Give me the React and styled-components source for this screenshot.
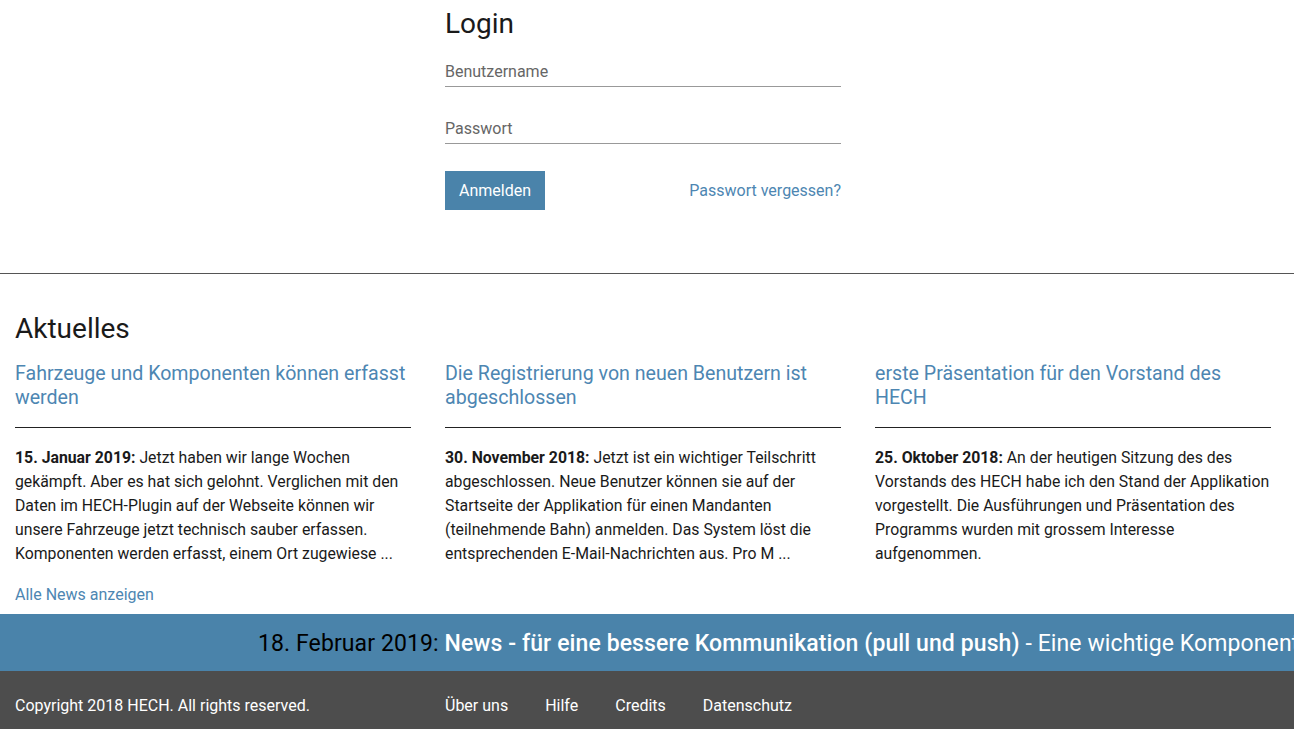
import React from 'react';
import styled, { createGlobalStyle } from 'styled-components';

const Colors = {
  blue: '#4a83aa',
  link: '#4d86b2',
  text: '#1a1a1a',
  label: '#666666',
  footer: '#4d4d4d',
};

const GlobalStyle = createGlobalStyle`
  html, body { margin: 0; padding: 0; background: #fff; }
  body {
    font-family: Roboto, "Liberation Sans", sans-serif;
    color: ${Colors.text};
    font-size: 16px;
  }
  * { box-sizing: border-box; }
`;

const Page = styled.div`
  width: 1294px;
  overflow: hidden;
`;

/* LOGIN block */
const LoginSection = styled.section`
  display: grid;
  grid-template-columns: 396px;
  padding: 0 0 0 445px;
  height: 274px;
  border-bottom: 1px solid #555;
`;

const Title = styled.h1`
  margin: 0;
  font-weight: 400;
  font-size: 28px;
  line-height: 34px;
  padding-top: 7px;
`;

const Field = styled.label`
  display: block;
  margin-top: ${p => p.first ? '21px' : '32px'};
  padding-bottom: 5px;
  border-bottom: 1px solid #999;
  color: ${Colors.label};
  font-size: 16px;
  line-height: 19px;
`;

const ActionRow = styled.div`
  display: flex;
  justify-content: space-between;
  align-items: center;
  margin-top: 27px;
`;

const Button = styled.button`
  width: 100px;
  height: 39px;
  border: none;
  background: ${Colors.blue};
  color: #fff;
  font-family: inherit;
  font-size: 16px;
  padding: 0;
`;

const Link = styled.a`
  color: ${Colors.link};
  text-decoration: none;
  font-size: 16px;
  line-height: 19px;
`;

/* NEWS block */
const NewsSection = styled.section`
  padding: 38px 0 0 15px;
  height: 340px;
`;

const SectionTitle = styled.h2`
  margin: 0;
  font-weight: 400;
  font-size: 28px;
  line-height: 34px;
`;

const NewsGrid = styled.div`
  display: grid;
  grid-template-columns: repeat(3, 396px);
  column-gap: 34px;
  margin-top: 16px;
`;

const NewsItem = styled.article``;

const NewsTitle = styled.h3`
  margin: 0;
  height: 66px;
  font-weight: 400;
  font-size: 19.6px;
  line-height: 24px;
  color: ${Colors.link};
  border-bottom: 1px solid #222;
`;

const NewsBody = styled.p`
  margin: 18px 0 0;
  font-size: 15.8px;
  line-height: 24px;
  color: ${Colors.text};
`;

const AllNews = styled(Link)`
  display: inline-block;
  margin-top: 19px;
`;

/* TICKER and FOOTER */
const Ticker = styled.div`
  height: 57px;
  background: ${Colors.blue};
  display: flex;
  align-items: center;
  padding: 2px 0 0 258px;
  white-space: nowrap;
  overflow: hidden;
  font-size: 23px;
  letter-spacing: 0.1px;
  color: #fff;
`;

const TickerDate = styled.span`
  color: #000;
`;

const TickerTitle = styled.b`
  font-weight: 500;
`;

const Footer = styled.footer`
  height: 58px;
  background: ${Colors.footer};
  display: grid;
  grid-template-columns: 430px 1fr;
  align-items: center;
  padding: 10px 0 0 15px;
  color: #fff;
  font-size: 16px;
`;

const FooterLinks = styled.nav`
  display: flex;
  column-gap: 37px;
`;

const FooterLink = styled.a`
  color: #fff;
  text-decoration: none;
`;

const news = [
  {
    title: 'Fahrzeuge und Komponenten können erfasst werden',
    date: '15. Januar 2019:',
    text: 'Jetzt haben wir lange Wochen gekämpft. Aber es hat sich gelohnt. Verglichen mit den Daten im HECH-Plugin auf der Webseite können wir unsere Fahrzeuge jetzt technisch sauber erfassen. Komponenten werden erfasst, einem Ort zugewiese ...',
  },
  {
    title: 'Die Registrierung von neuen Benutzern ist abgeschlossen',
    date: '30. November 2018:',
    text: 'Jetzt ist ein wichtiger Teilschritt abgeschlossen. Neue Benutzer können sie auf der Startseite der Applikation für einen Mandanten (teilnehmende Bahn) anmelden. Das System löst die entsprechenden E-Mail-Nachrichten aus. Pro M ...',
  },
  {
    title: 'erste Präsentation für den Vorstand des HECH',
    date: '25. Oktober 2018:',
    text: 'An der heutigen Sitzung des des Vorstands des HECH habe ich den Stand der Applikation vorgestellt. Die Ausführungen und Präsentation des Programms wurden mit grossem Interesse aufgenommen.',
  },
];

const App = () => {
  return (
    <Page>
      <GlobalStyle />
      <LoginSection>
        <div>
          <Title>Login</Title>
          <Field first>Benutzername</Field>
          <Field>Passwort</Field>
          <ActionRow>
            <Button>Anmelden</Button>
            <Link href="#">Passwort vergessen?</Link>
          </ActionRow>
        </div>
      </LoginSection>
      <NewsSection>
        <SectionTitle>Aktuelles</SectionTitle>
        <NewsGrid>
          {news.map(n => (
            <NewsItem key={n.title}>
              <NewsTitle>{n.title}</NewsTitle>
              <NewsBody><b>{n.date}</b> {n.text}</NewsBody>
            </NewsItem>
          ))}
        </NewsGrid>
        <AllNews href="#">Alle News anzeigen</AllNews>
      </NewsSection>
      <Ticker>
        <TickerDate>18. Februar 2019:</TickerDate>&nbsp;
        <TickerTitle>News - für eine bessere Kommunikation (pull und push)</TickerTitle>
        &nbsp;- Eine wichtige Komponente der Applikation
      </Ticker>
      <Footer>
        <span>Copyright 2018 HECH. All rights reserved.</span>
        <FooterLinks>
          <FooterLink href="#">Über uns</FooterLink>
          <FooterLink href="#">Hilfe</FooterLink>
          <FooterLink href="#">Credits</FooterLink>
          <FooterLink href="#">Datenschutz</FooterLink>
        </FooterLinks>
      </Footer>
    </Page>
  );
};

export default App;
